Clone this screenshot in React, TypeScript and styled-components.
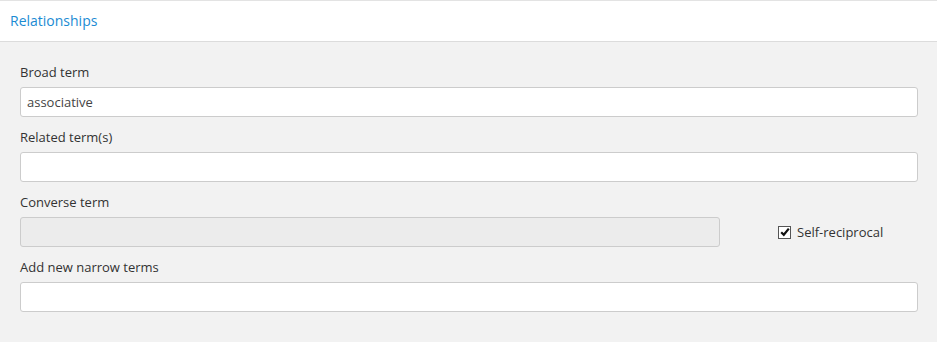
import React from 'react'
import styled, { createGlobalStyle } from 'styled-components'

const GlobalStyle = createGlobalStyle`
  html, body {
    margin: 0;
    padding: 0;
    background: #f2f2f2;
    font-family: 'Open Sans', 'Liberation Sans', sans-serif;
  }
`

function App() {
  return (
    <>
      <GlobalStyle />
      <Panel>
        <Header>
          <Title>Relationships</Title>
        </Header>
        <Body>
          <Field>
            <Label>Broad term</Label>
            <Input defaultValue='associative' />
          </Field>
          <Field>
            <Label>Related term(s)</Label>
            <Input />
          </Field>
          <Field>
            <Label>Converse term</Label>
            <Row>
              <Input disabled $width='700px' />
              <CheckLabel>
                <Box>
                  <svg width='10' height='10' viewBox='0 0 10 10'>
                    <path d='M1.2 5.2 L3.8 7.8 L8.8 1.6' fill='none' stroke='#111' strokeWidth='2.2' />
                  </svg>
                </Box>
                Self-reciprocal
              </CheckLabel>
            </Row>
          </Field>
          <Field>
            <Label>Add new narrow terms</Label>
            <Input />
          </Field>
        </Body>
      </Panel>
    </>
  )
}
export default App

const Panel = styled('div')({
  width: '100%',
  minHeight: '342px',
  background: '#f2f2f2',
  borderTop: '1px solid #e3e3e3'
})

const Header = styled('div')({
  background: '#ffffff',
  height: '40px',
  borderBottom: '1px solid #dcdcdc',
  display: 'flex',
  alignItems: 'center',
  padding: '0 10px'
})

const Title = styled('span')({
  color: '#1b8bd3',
  fontSize: '14px',
  marginTop: '-1px'
})

const Body = styled('div')({
  padding: '20px 19px 20px 20px',
  display: 'flex',
  flexDirection: 'column',
  gap: '10px'
})

const Field = styled('div')({
  display: 'flex',
  flexDirection: 'column',
  gap: '5px'
})

const Label = styled('label')({
  fontSize: '13px',
  lineHeight: '20px',
  color: '#333333'
})

const Row = styled('div')({
  display: 'flex',
  alignItems: 'center'
})

const Input = styled('input')<{ $width?: string }>(({ $width }) => ({
  boxSizing: 'border-box',
  width: $width || '100%',
  flex: $width ? `0 0 ${$width}` : undefined,
  height: '30px',
  border: '1px solid #cccccc',
  borderRadius: '3px',
  background: '#ffffff',
  padding: '0 6px',
  fontFamily: "'Open Sans', 'Liberation Sans', sans-serif",
  fontSize: '13px',
  color: '#444444',
  outline: 'none',
  '&:disabled': {
    background: '#ececec'
  }
}))

const CheckLabel = styled('label')({
  display: 'flex',
  alignItems: 'center',
  gap: '6px',
  marginLeft: '58px',
  fontSize: '13px',
  color: '#333333'
})

const Box = styled('span')({
  boxSizing: 'border-box',
  width: '13px',
  height: '13px',
  border: '1px solid #555',
  background: '#fff',
  display: 'flex',
  alignItems: 'center',
  justifyContent: 'center'
})
